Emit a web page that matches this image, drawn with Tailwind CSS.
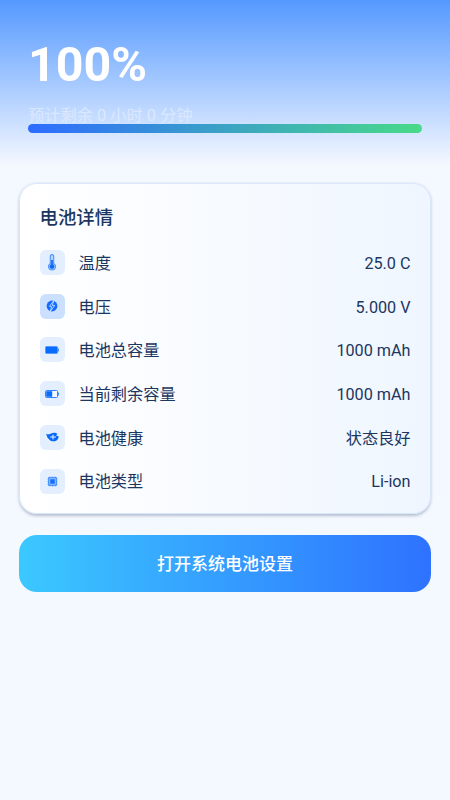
<!DOCTYPE html>
<html lang="zh-CN">
<head>
<meta charset="utf-8">
<title>电池详情</title>
<script src="https://cdn.jsdelivr.net/npm/@tailwindcss/browser@4"></script>
</head>
<body class="h-[800px] overflow-hidden bg-[#f4f8ff] font-[Roboto,'Noto_Sans_CJK_SC',sans-serif] text-[#1b365f]">
<header class="h-[165px] bg-linear-to-b/srgb from-[#5599ff] to-[#f4f8ff] px-7 pt-[37px]">
  <h1 class="h-[56px] text-[48.4px] leading-[56px] font-bold text-white">100%</h1>
  <p class="mt-[11px] h-[20px] text-[16.25px] leading-[24px] whitespace-nowrap text-[#e1ecff]/80">预计剩余 0 小时 0 分钟</p>
  <div class="relative -mt-[0.5px] h-[9px] w-[394px] rounded-full bg-linear-to-r/srgb from-[#2e6bff] to-[#48da89]"></div>
</header>
<main class="px-[19px] pt-[18px]">
  <section class="h-[331px] rounded-[18px] border-[1.5px] border-[#d9e7fc] bg-linear-to-r/srgb from-white to-[#eff6ff] px-[19.5px] pt-[20px] shadow-[0_1.5px_3px_rgba(30,50,90,0.28)]">
    <h2 class="h-[27px] text-[18.4px] leading-[27px] font-medium">电池详情</h2>
    <ul class="mt-[9.4px] text-[16.2px] leading-[24px]">
      <li class="flex h-[43.75px] items-center">
        <span class="flex size-[25px] items-center justify-center rounded-[6px] bg-[#e3efff]">
          <svg class="h-[17px] w-[10px]" viewBox="0 0 10 17" fill="none"><path d="M3.3 9.5V2.3a1.7 1.7 0 0 1 3.4 0v7.2a3.5 3.5 0 1 1-3.4 0Z" fill="#b8d5ff" stroke="#4a94ff" stroke-width="1.1"/><path d="M5 6v6" stroke="#1769f5" stroke-width="1.8"/><circle cx="5" cy="12.6" r="2.4" fill="#1268f5"/></svg>
        </span>
        <span class="ml-[14px] grow pt-[3px]">温度</span><span class="pt-[3px]">25.0 C</span>
      </li>
      <li class="flex h-[43.75px] items-center">
        <span class="flex size-[25px] items-center justify-center rounded-[6px] bg-[#cbdfff]">
          <svg class="size-[12px]" viewBox="0 0 12 12"><circle cx="6" cy="6" r="5.4" fill="#126cff"/><path d="M7.6.8 3.5 6.3h2.2L4.4 11.2 8.7 5.4H6.4Z" fill="#126cff" stroke="#cbdfff" stroke-width=".9" stroke-linejoin="round"/></svg>
        </span>
        <span class="ml-[14px] grow pt-[3px]">电压</span><span class="pt-[3px]">5.000 V</span>
      </li>
      <li class="flex h-[43.75px] items-center">
        <span class="flex size-[25px] items-center justify-center rounded-[6px] bg-[#e3efff]">
          <svg class="h-[8px] w-[14px]" viewBox="0 0 14 8"><rect x=".5" y=".5" width="12" height="7" rx="1" fill="#086bff" stroke="#4b96ff" stroke-width=".8"/><path d="M13.3 2.5v3" stroke="#247cff" stroke-width="1"/></svg>
        </span>
        <span class="ml-[14px] grow pt-[3px]">电池总容量</span><span class="pt-[3px]">1000 mAh</span>
      </li>
      <li class="flex h-[43.75px] items-center">
        <span class="flex size-[25px] items-center justify-center rounded-[6px] bg-[#e3efff]">
          <svg class="h-[8px] w-[14px]" viewBox="0 0 14 8"><rect x=".5" y=".5" width="12" height="7" rx="1" fill="#f4f9ff" stroke="#3185ff"/><path d="M1.2 1.2h6v5.600h-6Z" fill="#086bff"/><path d="M13.3 2.5v3" stroke="#247cff" stroke-width="1"/></svg>
        </span>
        <span class="ml-[14px] grow pt-[2px]">当前剩余容量</span><span class="pt-[2px]">1000 mAh</span>
      </li>
      <li class="flex h-[43.75px] items-center">
        <span class="flex size-[25px] items-center justify-center rounded-[6px] bg-[#e3efff]">
          <svg class="h-[10px] w-[13px]" viewBox="0 0 13 10"><path d="M.3 1.800c1.500.8 2.800.7 4.200-.1C6.800.2 10 .3 11.500 2L9.800 3.200 12.500 4.200c.2 2-.8 3.500-2 4.300-2.200 1.300-5 1.100-6.700-.6C1.900 6.500.6 4.800.3 1.800Z" fill="#0869f8"/><path d="M4.500 5h5M7 3v4" fill="none" stroke="#e3efff" stroke-width="1.100" stroke-linecap="round"/></svg>
        </span>
        <span class="ml-[14px] grow pt-[3px]">电池健康</span><span class="pt-[3px]">状态良好</span>
      </li>
      <li class="flex h-[43.75px] items-center">
        <span class="flex size-[25px] items-center justify-center rounded-[6px] bg-[#e3efff]">
          <svg class="size-[11px]" viewBox="0 0 11 11"><path d="M3 .5v10M5.500.5v10M8 .5v10M.5 3h10M.5 5.500h10M.5 8h10" stroke="#5d9fff" stroke-width="1"/><rect x="1" y="1" width="9" height="9" rx="1" fill="#4c93ff"/><rect x="2.800" y="2.800" width="5.400" height="5.400" fill="#146fff" stroke="#b3d3ff" stroke-width=".8"/></svg>
        </span>
        <span class="ml-[14px] grow pt-[2px]">电池类型</span><span class="pt-[2px]">Li-ion</span>
      </li>
    </ul>
  </section>
  <button class="mt-[21px] block h-[57px] w-full rounded-[18px] bg-linear-to-r/srgb from-[#3bc8ff] to-[#2e72ff] pt-[1px] text-[17px] leading-[57px] font-medium text-white">打开系统电池设置</button>
</main>
</body>
</html>
